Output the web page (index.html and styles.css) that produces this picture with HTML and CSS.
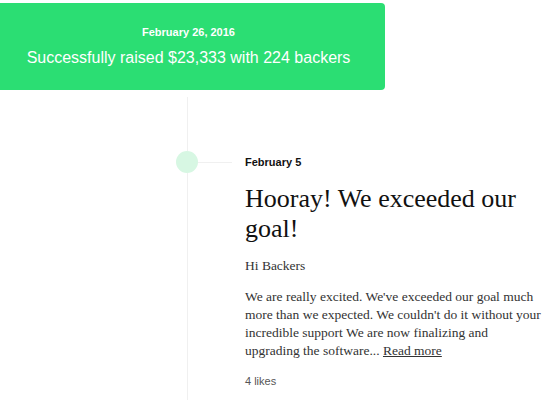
FILE: index.html
```html
<!DOCTYPE html>
<html>
<head>
<meta charset="utf-8">
<link rel="stylesheet" href="styles.css">
</head>
<body>
<div class="banner">
  <div class="banner-date">February 26, 2016</div>
  <div class="banner-title">Successfully raised $23,333 with 224 backers</div>
</div>
<div class="timeline">
  <article class="post">
    <div class="post-head">
      <span class="dot"></span>
      <span class="connector"></span>
      <span class="post-date">February 5</span>
    </div>
    <div class="post-body">
      <h2 class="post-title">Hooray! We exceeded our goal!</h2>
      <p class="greeting">Hi Backers</p>
      <p class="excerpt">We are really excited. We've exceeded our goal much more than we expected. We couldn't do it without your incredible support We are now finalizing and upgrading the software... <a href="#" class="more">Read more</a></p>
      <div class="likes">4 likes</div>
    </div>
  </article>
</div>
</body>
</html>
```
FILE: styles.css
```css
html, body {
  margin: 0;
  padding: 0;
  background: #fff;
  overflow: hidden;
}
body {
  font-family: "Liberation Sans", Arial, sans-serif;
  color: #282828;
}
.banner {
  margin-top: 3px;
  width: 385px;
  height: 87px;
  box-sizing: border-box;
  background: #2bde73;
  border-radius: 0 4px 4px 0;
  color: #fff;
  text-align: center;
  padding: 22px 8px 0 0;
}
.banner-date {
  font-size: 11px;
  font-weight: bold;
  line-height: 14px;
}
.banner-title {
  margin-top: 9px;
  font-size: 16px;
  line-height: 20px;
}
.timeline {
  margin-top: 7px;
  margin-left: 187px;
  border-left: 1px solid #f0f0f0;
  height: 249px;
  padding-top: 54px;
}
.post-head {
  display: flex;
  align-items: center;
  margin-left: -12px;
}
.dot {
  width: 22px;
  height: 22px;
  border-radius: 50%;
  background: #d7f7e3;
  flex: none;
}
.connector {
  width: 34px;
  height: 1px;
  background: #f0f0f0;
  flex: none;
}
.post-date {
  margin-left: 13px;
  font-size: 11px;
  font-weight: bold;
  color: #111;
}
.post-body {
  margin-left: 57px;
  width: 300px;
}
.post-title {
  margin: 11px 0 0;
  font-family: "Liberation Serif", "Times New Roman", serif;
  font-weight: normal;
  font-size: 26px;
  line-height: 30px;
  color: #111;
}
.greeting {
  margin: 13px 0 0;
  font-family: "Liberation Serif", serif;
  font-size: 13.5px;
  line-height: 18px;
  color: #333;
}
.excerpt {
  margin: 13px 0 0;
  font-family: "Liberation Serif", serif;
  font-size: 13.5px;
  line-height: 18px;
  color: #333;
}
.more {
  color: #333;
  text-decoration: underline;
}
.likes {
  margin-top: 15px;
  font-size: 11px;
  color: #555;
}
```
